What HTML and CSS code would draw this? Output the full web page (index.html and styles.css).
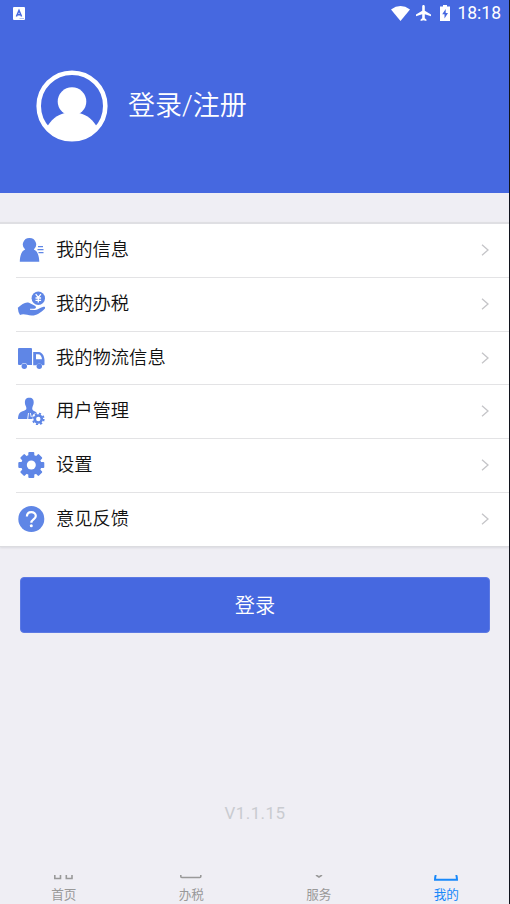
FILE: index.html
```html
<!DOCTYPE html>
<html lang="zh-CN">
<head>
<meta charset="utf-8">
<title>我的</title>
<link rel="stylesheet" href="styles.css">
</head>
<body>
<div class="app">
  <header class="hero">
    <div class="status">
      <svg class="ime" width="12" height="13" viewBox="0 0 12 13"><rect width="12" height="13" rx="1" fill="#fff"/><path d="M3.400 9.500 6 3.500l2.600 6M4.300 7.700h3.400" fill="none" stroke="#4668e0" stroke-width="1.500"/><path d="M6.500 11.500h4.500" stroke="#a3b4f0" stroke-width=".8"/></svg>
      <div class="status-right">
        <svg width="19" height="15" viewBox="0 0 19 15"><path d="M0 3.400Q9.500-3.300 19 3.400L9.500 15Z" fill="#fff"/></svg>
        <svg width="15" height="16" viewBox="0 0 15 16"><path d="M7.500 0c-.9 0-1.300.7-1.300 1.500v4.200L0 9.600v1.600l6.200-1.900v4L4.600 14.500V16l2.900-.8 2.900.8v-1.500l-1.600-1.200v-4l6.200 1.900V9.600L8.800 5.700V1.500C8.800.7 8.400 0 7.500 0Z" fill="#fff"/></svg>
        <svg width="10" height="16" viewBox="0 0 10 16"><path d="M3 0h4v1.600h3V16H0V1.600h3Z" fill="#fff"/><path d="M5.700 4 2.200 9.200h2.300V13.500L8 8H5.700Z" fill="#4668e0"/></svg>
        <span class="clock">18:18</span>
      </div>
    </div>
    <div class="profile">
      <svg width="72" height="72" viewBox="0 0 72 72"><defs><clipPath id="disc"><circle cx="36" cy="36" r="34"/></clipPath></defs><circle cx="36" cy="36" r="33.300" fill="none" stroke="#fff" stroke-width="4.600"/><circle cx="36" cy="31.500" r="14.300" fill="#fff"/><path clip-path="url(#disc)" d="M11.500 56C17 47 25 43.500 30 43h12c5 .5 13 4 18.500 13v16h-49Z" fill="#fff"/></svg>
      <span class="name">登录/注册</span>
    </div>
  </header>

  <nav class="menu">
    <a class="row"><svg class="icon" viewBox="0 0 28 28"><path d="M12.500 2a6.500 6.500 0 0 1 4.300 11.500c3.700 1.400 5.200 5.800 5.500 12.300H2.800c.2-6.500 1.700-10.900 5.400-12.300A6.500 6.500 0 0 1 12.500 2Z"/><path d="M21 10.700h5M20.500 13.700h6M21.500 16.700h5" stroke="#5f86e6" stroke-width="1.300"/></svg><span>我的信息</span><svg class="chevron" viewBox="0 0 8 12"><path d="m1 .7 6 5.300-6 5.300"/></svg></a>
    <a class="row"><svg class="icon" viewBox="0 0 28 28"><circle cx="21.300" cy="8.200" r="6.700"/><path d="m18.700 4.200 2.600 3.300 2.600-3.300M21.300 7.500v5M18.500 8h5.600M18.500 10.300h5.600" fill="none" stroke="#fff" stroke-width="1.300"/><path d="M.8 17.800C5 14 8.500 11.600 12 12.800l6 3c1.500.9 1.200 2.700-.7 2.900l-4.300.1v.9l5 .2c3-.3 5.500-2.700 8.500-3.200 2-.1 2.300 1.400 1 2.400-4.500 4.200-8 6.700-13 6.500-4.300-.3-7.500-2.300-11.500-.7Q1 22 .8 17.800Z"/></svg><span>我的办税</span><svg class="chevron" viewBox="0 0 8 12"><path d="m1 .7 6 5.300-6 5.300"/></svg></a>
    <a class="row"><svg class="icon" viewBox="0 0 28 28"><path d="M2 4h12q1 0 1 1v16h-4.600a3.400 3.400 0 0 0-6.200 0H2q-1 0-1-1V5q0-1 1-1Z"/><path fill-rule="evenodd" d="M16.200 8H22c3.500.5 5.300 4 5.500 8v4.500q0 .8-1 .8h-1.200a3.400 3.400 0 0 0-6 0h-3.100ZM19 10.200v5h6c-.3-3-1.600-5-4-5Z"/><circle cx="7.300" cy="22.300" r="2.700"/><circle cx="22.300" cy="22.300" r="2.700"/></svg><span>我的物流信息</span><svg class="chevron" viewBox="0 0 8 12"><path d="m1 .7 6 5.300-6 5.300"/></svg></a>
    <a class="row"><svg class="icon" viewBox="0 0 28 28"><path d="M12.300.8c3.300 0 4.600 2 4.400 5-.1 2.600-1.500 3.700-1.500 5.800 0 2.500 3 2.700 4.600 4-3 .8-5.300 3.300-4.800 6.400H1c.3-5 1.300-6.500 4.500-7.800 2.300-.8 3.900-1 3.900-2.900 0-2-1.500-3-1.500-5.500C7.800 2.700 9 .8 12.300.8Z"/><path d="m11.500 16-.8 6M13.300 16l1 4" stroke="#fff" stroke-width=".9"/><circle cx="21.300" cy="22" r="3.500" fill="none" stroke="#5f86e6" stroke-width="2.600"/><circle cx="21.300" cy="22" r="5.400" fill="none" stroke="#5f86e6" stroke-width="1.800" stroke-dasharray="2.120 2.120"/></svg><span>用户管理</span><svg class="chevron" viewBox="0 0 8 12"><path d="m1 .7 6 5.300-6 5.300"/></svg></a>
    <a class="row"><svg class="icon" viewBox="0 0 28 28"><rect x="11.300" y="1" width="6" height="26" rx="1"/><rect x="1.300" y="11" width="26" height="6" rx="1"/><g transform="rotate(45 14.300 14)"><rect x="11.300" y="1" width="6" height="26" rx="1"/><rect x="1.300" y="11" width="26" height="6" rx="1"/></g><circle cx="14.300" cy="14" r="10.200"/><circle cx="14.300" cy="14" r="4.500" fill="#fff"/></svg><span>设置</span><svg class="chevron" viewBox="0 0 8 12"><path d="m1 .7 6 5.300-6 5.300"/></svg></a>
    <a class="row"><svg class="icon" viewBox="0 0 28 28"><circle cx="14.300" cy="14" r="13"/><path d="M9.900 11.500c0-6 8.900-5.600 8.900-.6 0 3.300-4.500 3.500-4.500 6.800" fill="none" stroke="#fff" stroke-width="2.200"/><circle cx="14.300" cy="20.800" r="1.500" fill="#fff"/></svg><span>意见反馈</span><svg class="chevron" viewBox="0 0 8 12"><path d="m1 .7 6 5.300-6 5.300"/></svg></a>
  </nav>

  <button class="login">登录</button>
  <div class="version">V1.1.15</div>

  <footer class="tabs">
    <a class="tab"><svg width="22" height="6" viewBox="0 0 22 6"><path d="M1.800 0v3.500h5.700V0M13.300 0v3.500h5.700V0"/></svg><span>首页</span></a>
    <a class="tab"><svg width="22" height="6" viewBox="0 0 22 6"><path d="M.8 0v1.500q0 1 1 1h18q1 0 1-1V0"/></svg><span>办税</span></a>
    <a class="tab"><svg width="22" height="6" viewBox="0 0 22 6"><path d="m8 0 3 2 3-2"/></svg><span>服务</span></a>
    <a class="tab active"><svg width="24" height="6" viewBox="0 0 24 6"><path d="M1.800 0Q1 2 1 4.800h22Q23 2 22.200 0"/></svg><span>我的</span></a>
  </footer>
</div>
</body>
</html>
```
FILE: styles.css
```css
* { box-sizing: border-box; }
body {
  margin: 0;
  background: #efeef4;
  font-family: Roboto, "Noto Sans CJK SC", sans-serif;
  color: #111;
}
svg { display: block; flex: none; }
.app {
  height: 904px;
  display: flex;
  flex-direction: column;
  border-right: 1px solid #10131c;
  overflow: hidden;
}
.hero { height: 193px; background: #4668e0; flex: none; }
.status {
  height: 26px;
  padding: 0 8px 0 13px;
  display: flex;
  align-items: center;
  justify-content: space-between;
}
.status-right { display: flex; align-items: center; height: 26px; }
.status-right svg { margin-right: 6px; }
.status-right svg:nth-child(2) { margin-right: 9px; }
.status-right svg:nth-child(3) { margin-right: 7px; }
.clock { color: #fff; font-size: 17.500px; line-height: 26px; }
.profile {
  display: flex;
  align-items: center;
  gap: 20px;
  margin-top: 44px;
  padding-left: 36px;
  color: #fff;
}
.name { font-size: 27px; line-height: 40px; font-weight: 350; }
.menu {
  height: 325px;
  flex: none;
  margin-top: 29px;
  display: flex;
  flex-direction: column;
  background: #fff;
  border-top: 2px solid #dfdfe3;
  border-bottom: 1px solid #dcdce0;
  box-shadow: 0 1px 2px #d9d9df;
}
.row {
  flex: 1;
  margin-left: 16px;
  padding: 0 20px 1px 1px;
  display: flex;
  align-items: center;
  border-bottom: 1px solid #e3e3e5;
  font-size: 18.300px;
  font-weight: 350;
}
.row:last-child { border-bottom: 0; }
.row span { flex: 1; margin: 0 0 0 11px; line-height: 26px; }
.icon { width: 28px; height: 28px; fill: #5f86e6; }
.chevron { width: 8px; height: 12px; fill: none; stroke: #c5c5c8; stroke-width: 1.300; }
.login {
  height: 56px;
  flex: none;
  margin: 30px 19px 0 20px;
  padding: 0 0 2px;
  border: 1px solid #5c79e3;
  border-radius: 4px;
  background: #4668e0;
  color: #fff;
  font: 350 20.200px Roboto, "Noto Sans CJK SC", sans-serif;
}
.version {
  margin-top: 170px;
  padding-left: 1px;
  text-align: center;
  font-size: 17px;
  line-height: 20px;
  letter-spacing: .4px;
  color: #c9cbd0;
}
.tabs { display: flex; margin: auto -1px 0 0; height: 29px; }
.tab {
  flex: 1;
  display: flex;
  flex-direction: column;
  align-items: center;
  color: #999;
  font-size: 12.600px;
}
.tab span { line-height: 18px; margin-top: 5px; }
.tab svg { fill: none; stroke: #999; stroke-width: 1.600; }
.tab.active { color: #1989fa; }
.active svg { stroke: #1989fa; stroke-width: 2; }
```
